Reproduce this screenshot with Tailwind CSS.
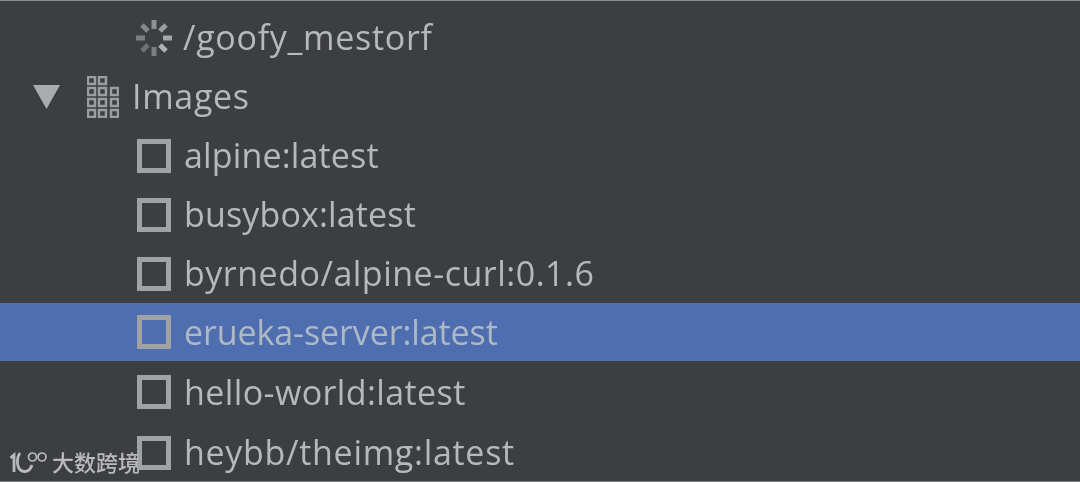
<!DOCTYPE html>
<html lang="en">
<head>
  <meta charset="UTF-8" />
  <title>Docker tree</title>
  <script src="https://cdn.jsdelivr.net/npm/@tailwindcss/browser@4"></script>
</head>
<body class="bg-[#3d3e40] w-[1080px] h-[482px] overflow-hidden relative font-['Open_Sans',sans-serif] text-[#b6b9bb] text-[34px]">
  <div class="blur-[0.6px]">
  <div class="h-px bg-[#8a8b8c]"></div>
  <div class="pt-[7px]">
    <!-- Running container -->
    <div class="h-[59px] flex items-center pl-[135px]">
      <svg class="w-[38px] h-[38px] shrink-0" viewBox="0 0 38 38" fill="none" stroke-width="5">
        <path d="M19 1v9" stroke="#8f9192" />
        <path d="M31 6l-6 6" stroke="#9a9c9d" />
        <path d="M37 19h-9" stroke="#a4a6a7" />
        <path d="M31 32l-6-6" stroke="#b0b2b3" />
        <path d="M19 37v-9" stroke="#7b7d7e" />
        <path d="M7 32l6-6" stroke="#6f7172" />
        <path d="M1 19h9" stroke="#7c7e7f" />
        <path d="M7 6l6 6" stroke="#868889" />
      </svg>
      <span class="ml-[10px] tracking-[0.7px]">/goofy_mestorf</span>
    </div>

    <!-- Images group -->
    <div class="h-[59px] flex items-center pl-[33px]">
      <svg class="w-[27px] h-[24px] shrink-0" viewBox="0 0 27 24"><path d="M0 0h27L13.500 24z" fill="#a9abac" /></svg>
      <svg class="w-[32px] h-[42px] shrink-0 ml-[27px]" viewBox="0 0 32 42" fill="none" stroke="#9b9d9e" stroke-width="2.500">
        <rect x="1" y="1" width="7" height="7" /><rect x="12" y="1" width="7" height="7" />
        <rect x="1" y="12" width="7" height="7" /><rect x="12" y="12" width="7" height="7" /><rect x="24" y="12" width="7" height="7" />
        <rect x="1" y="23" width="7" height="7" /><rect x="12" y="23" width="7" height="7" /><rect x="24" y="23" width="7" height="7" />
        <rect x="1" y="34" width="7" height="7" /><rect x="12" y="34" width="7" height="7" /><rect x="24" y="34" width="7" height="7" />
      </svg>
      <span class="ml-[13px] tracking-[0.67px]">Images</span>
    </div>

    <!-- Image rows -->
    <div class="h-[59px] flex items-center pl-[137px]">
      <div class="w-[34px] h-[34px] border-[5px] border-[#a0a2a3] shrink-0"></div>
      <span class="ml-[13px] tracking-[0.15px]">alpine:latest</span>
    </div>
    <div class="h-[59px] flex items-center pl-[137px]">
      <div class="w-[34px] h-[34px] border-[5px] border-[#a0a2a3] shrink-0"></div>
      <span class="ml-[13px] tracking-[0.15px]">busybox:latest</span>
    </div>
    <div class="h-[59px] flex items-center pl-[137px]">
      <div class="w-[34px] h-[34px] border-[5px] border-[#a0a2a3] shrink-0"></div>
      <span class="ml-[13px] tracking-[0.5px]">byrnedo/alpine-curl:0.1.6</span>
    </div>
    <div class="h-[58px] flex items-center pl-[137px] bg-[#4e6eaf]">
      <div class="w-[34px] h-[34px] border-[5px] border-[#a0a2a3] shrink-0"></div>
      <span class="ml-[13px] tracking-[-0.1px] text-[#afb9c6]">erueka-server:latest</span>
    </div>
    <div class="h-[62px] flex items-center pl-[137px]">
      <div class="w-[34px] h-[34px] border-[5px] border-[#a0a2a3] shrink-0"></div>
      <span class="ml-[13px] tracking-[0.4px]">hello-world:latest</span>
    </div>
    <div class="h-[59px] flex items-center pl-[137px]">
      <div class="w-[34px] h-[34px] border-[5px] border-[#a0a2a3] shrink-0"></div>
      <span class="ml-[13px] tracking-[0.7px]">heybb/theimg:latest</span>
    </div>
  </div>
  </div>

  <!-- Watermark -->
  <div class="absolute left-[10px] top-[445px] flex items-center blur-[0.4px]">
    <svg class="w-[38px] h-[24px] shrink-0 mt-[7px]" viewBox="0 0 38 24" fill="none" stroke="#b9babb">
      <path d="M0.500 6l3.500-3v17" stroke-width="2.800" />
      <path d="M10 1c-3 4-3 10-2 13 2 7 11 8 14-1" stroke-width="2.800" />
      <circle cx="22.500" cy="5" r="4" stroke-width="1.700" />
      <circle cx="32" cy="5" r="4" stroke-width="1.700" />
    </svg>
    <span class="ml-[4px] text-[22px] leading-[26px] font-medium text-[#b9babb] font-['Noto_Sans_CJK_SC',sans-serif]">大数跨境</span>
  </div>
  <div class="absolute left-0 bottom-0 w-full h-px bg-[#77797a]"></div>
</body>
</html>
